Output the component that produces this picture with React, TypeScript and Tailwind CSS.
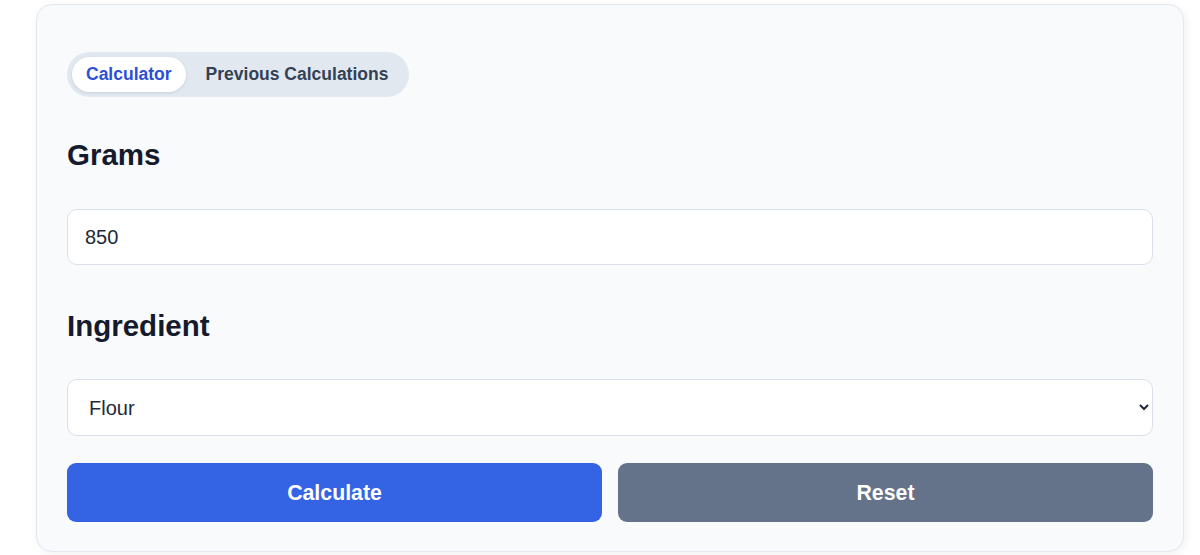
import { useState } from "react";

function App() {
  const [tab, setTab] = useState("calc");
  const [grams, setGrams] = useState("850");
  const [ingredient, setIngredient] = useState("Flour");

  const tabClass = (active: boolean) =>
    active
      ? "h-[35px] px-[14px] rounded-full bg-white text-[#2d4fd6] shadow-[0_1px_3px_rgba(15,23,42,0.12)]"
      : "h-[35px] pl-[20px] pr-[16px] rounded-full text-[#334155]";

  return (
    <div className="min-h-screen bg-white pt-[4px] font-['Liberation_Sans',Arial,sans-serif]">
      <div className="ml-[36px] w-[1148px] rounded-[16px] border border-[#e2e8f0] bg-[#f8fafc] px-[30px] pt-[47px] pb-[29px] shadow-[2px_2px_10px_rgba(15,23,42,0.06)]">
        <div className="inline-flex items-center rounded-full bg-[#e2e8f0] p-[5px] text-[17.5px] font-bold leading-none">
          <button className={tabClass(tab === "calc")} onClick={() => setTab("calc")}>
            Calculator
          </button>
          <button className={tabClass(tab === "prev")} onClick={() => setTab("prev")}>
            Previous Calculations
          </button>
        </div>

        <h2 className="mt-[40px] text-[29.5px] font-bold leading-[35px] text-[#151b2c]">Grams</h2>
        <input
          type="text"
          value={grams}
          onChange={(e) => setGrams(e.target.value)}
          className="mt-[37px] block h-[56px] w-full rounded-[10px] border border-[#d9e0ea] bg-white px-[17px] text-[20px] text-[#1f2937] outline-none"
        />

        <h2 className="mt-[43px] text-[29.5px] font-bold leading-[35px] text-[#151b2c]">Ingredient</h2>
        <select
          value={ingredient}
          onChange={(e) => setIngredient(e.target.value)}
          className="mt-[36px] block h-[57px] w-full rounded-[10px] border border-[#d9e0ea] bg-white pl-[17px] pr-[8px] text-[20px] text-[#1f2937] outline-none"
        >
          <option>Flour</option>
          <option>Sugar</option>
          <option>Butter</option>
          <option>Rice</option>
        </select>

        <div className="mt-[27px] grid grid-cols-2 gap-[16px]">
          <button className="h-[59px] rounded-[9px] bg-[#3464e3] pt-[2px] text-[21.3px] font-bold text-white">
            Calculate
          </button>
          <button
            className="h-[59px] rounded-[9px] bg-[#647389] pt-[2px] text-[21.3px] font-bold text-white"
            onClick={() => setGrams("")}
          >
            Reset
          </button>
        </div>
      </div>
    </div>
  );
}

export default App;
